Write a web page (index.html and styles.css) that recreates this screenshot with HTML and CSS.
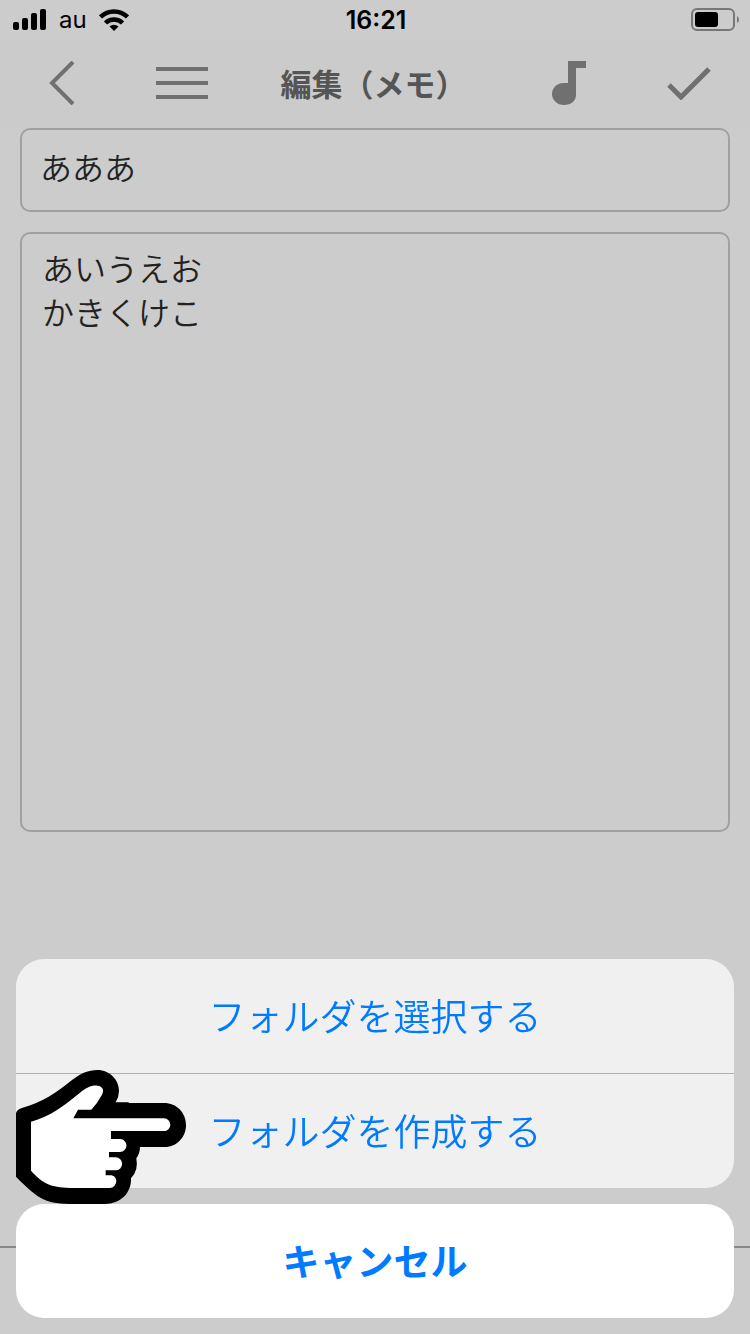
FILE: index.html
```html
<!DOCTYPE html>
<html lang="ja">
<head>
    <meta charset="UTF-8">
    <meta name="viewport" content="width=device-width, initial-scale=1.0">
    <title>編集（メモ）</title>
    <link rel="stylesheet" href="styles.css">
</head>
<body>

    <div class="status-bar">
        <div class="status-left">
            <svg width="34" height="22" viewBox="0 0 34 22">
                <rect x="0" y="13" width="6" height="8" rx="2"/>
                <rect x="9" y="9" width="6" height="12" rx="2"/>
                <rect x="18" y="4" width="6" height="17" rx="2"/>
                <rect x="27" y="0" width="6" height="21" rx="2"/>
            </svg>
            <span class="carrier">au</span>
            <svg width="30" height="22" viewBox="0 0 30 22">
                <path d="M1.5 8A19.5 19.5 0 0 1 28.5 8" fill="none" stroke="#000" stroke-width="4.5"/>
                <path d="M6.5 14A12 12 0 0 1 23.5 14" fill="none" stroke="#000" stroke-width="4.5"/>
                <path d="M10.5 17.5A7 7 0 0 1 19.5 17.5L15 22Z"/>
            </svg>
        </div>
        <span class="clock">16:21</span>
        <svg class="battery" width="48" height="24" viewBox="0 0 48 24">
            <rect x="1" y="1" width="42" height="21" rx="5" fill="none" stroke="#777" stroke-width="2"/>
            <rect x="4" y="4" width="23" height="15" rx="3"/>
            <path d="M46 8Q48 9 48 12Q48 14 46 15Z" fill="#777"/>
        </svg>
    </div>

    <header class="nav">
        <button class="nav-button" aria-label="戻る">
            <svg width="26" height="44" viewBox="0 0 26 44">
                <path d="M24 1L3 22L24 43" fill="none" stroke="#707070" stroke-width="4"/>
            </svg>
        </button>
        <button class="nav-button" aria-label="メニュー">
            <svg width="52" height="34" viewBox="0 0 52 34">
                <path d="M0 3H52M0 17H52M0 31H52" fill="none" stroke="#707070" stroke-width="4"/>
            </svg>
        </button>
        <h1 class="nav-title">編集（メモ）</h1>
        <button class="nav-button" aria-label="音楽">
            <svg width="34" height="44" viewBox="0 0 34 44">
                <path d="M16 0H34V7H24V34C24 40 19 44 12 44C5 44 0 39 0 33C0 27 5 22 11 22H16Z" fill="#707070"/>
            </svg>
        </button>
        <button class="nav-button" aria-label="完了">
            <svg width="44" height="34" viewBox="0 0 44 34">
                <path d="M2 19L14 31L42 3" fill="none" stroke="#707070" stroke-width="5"/>
            </svg>
        </button>
    </header>

    <main class="memo">
        <input class="memo-title" type="text" value="あああ" aria-label="タイトル">
        <textarea class="memo-body" aria-label="本文">あいうえお
かきくけこ</textarea>
    </main>

    <footer class="toolbar"></footer>

    <div class="sheet">
        <div class="sheet-group">
            <button class="sheet-button">フォルダを選択する</button>
            <button class="sheet-button">フォルダを作成する</button>
        </div>
        <button class="sheet-button sheet-cancel">キャンセル</button>
        <!-- 指マーク -->
        <svg class="pointer" width="170" height="134" viewBox="48 60 510 402">
            <path d="M48 190Q50 178 68 173C125 158 170 128 215 91C242 70 265 60 292 60C330 60 357 90 357 123Q357 140 347 157H386V159H492C530 159 558 188 558 225C558 262 530 291 495 291H420Q420 309 409 325Q416 362 393 385C395 430 360 462 315 462H220C140 460 122 455 48 380Z"/>
            <path d="M93 215C150 200 195 165 240 128C262 110 278 106 292 107C308 108 314 121 305 136Q292 161 274 179H234L220 205H492A19 19 0 0 1 492 243H333V267H360A19 19 0 0 1 360 306H327V322H347A19 19 0 0 1 347 361H317V376H330C343 376 349 384 349 394Q346 414 330 414H210C150 411 130 402 93 362Z" fill="#fff"/>
        </svg>
    </div>

</body>
</html>
```
FILE: styles.css
```css
* {
    box-sizing: border-box;
}
body {
    margin: 0;
    min-height: 100vh;
    display: flex;
    flex-direction: column;
    background-color: #ccc;
    font-family: "Noto Sans CJK JP", sans-serif;
    font-weight: 350;
}
button {
    border: none;
    padding: 0;
    background: none;
    font-family: inherit;
    cursor: pointer;
}
svg {
    display: block;
}
.status-bar {
    height: 40px;
    padding: 0 11px 0 13px;
    display: grid;
    grid-template-columns: 1fr auto 1fr;
    align-items: center;
    font-family: Inter, sans-serif;
    font-size: 25px;
    line-height: 40px;
    color: #000;
}
.status-left {
    display: flex;
    align-items: center;
    gap: 12px;
}
.carrier {
    font-size: 24px;
    font-weight: 400;
}
.clock {
    font-weight: 600;
}
.battery {
    justify-self: end;
}
.nav {
    height: 88px;
    padding: 0 1px 2px 2px;
    display: flex;
    align-items: center;
    background-color: #cbcbcb;
}
.nav-button {
    width: 120px;
    height: 86px;
    display: flex;
    align-items: center;
    justify-content: center;
}
.nav-title {
    flex: 1;
    margin: 0;
    padding-right: 4px;
    text-align: center;
    white-space: nowrap;
    font-size: 31px;
    line-height: 44px;
    font-weight: 700;
    color: #555;
}
.memo {
    padding: 0 20px;
    display: flex;
    flex-direction: column;
    gap: 20px;
}
.memo-title, .memo-body {
    width: 100%;
    border: 2px solid #a0a0a0;
    border-radius: 10px;
    background: none;
    font-family: inherit;
    font-size: 32px;
    font-weight: inherit;
    line-height: 44px;
    color: #222;
    outline: none;
}
.memo-title {
    height: 84px;
    padding: 0 18px 8px;
}
.memo-body {
    height: 600px;
    padding: 11px 20px;
    resize: none;
}
.toolbar {
    height: 88px;
    margin-top: auto;
    border-top: 2px solid #888;
}
.sheet {
    position: fixed;
    left: 16px;
    right: 16px;
    bottom: 16px;
    display: flex;
    flex-direction: column;
    gap: 16px;
}
.sheet-group {
    display: flex;
    flex-direction: column;
    border-radius: 28px;
    background-color: #f0f0f0;
    overflow: hidden;
}
.sheet-button {
    height: 114px;
    padding-bottom: 2px;
    font-size: 37px;
    font-weight: 350;
    color: #007aff;
}
.sheet-button + .sheet-button {
    height: 115px;
    border-top: 1px solid #b0b0b0;
}
.sheet-cancel {
    border-radius: 28px;
    background-color: #fff;
    font-weight: 700;
}
.pointer {
    position: absolute;
    left: 0;
    top: 111px;
    pointer-events: none;
}
```
